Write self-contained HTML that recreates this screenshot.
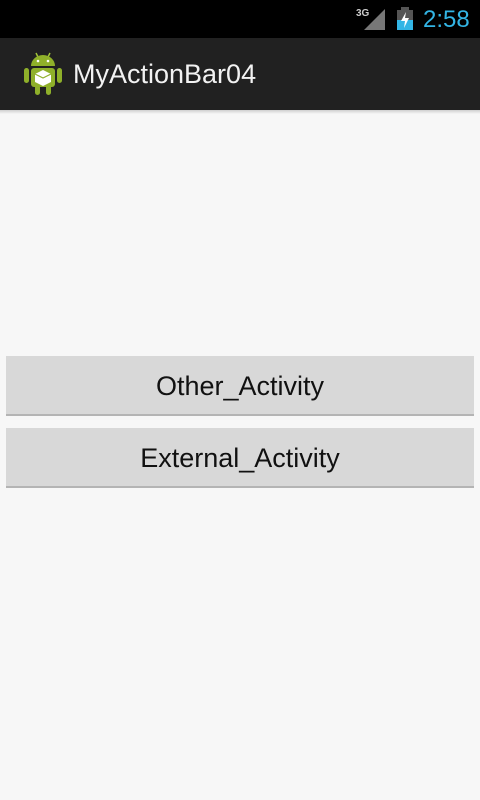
<!DOCTYPE html>
<html><head><style>
body{margin:0;width:480px;height:800px;background:#f7f7f7;font-family:"Liberation Sans",sans-serif;position:relative;overflow:hidden}
.sb{position:absolute;top:0;left:0;width:480px;height:38px;background:#000}
.ab{position:absolute;top:38px;left:0;width:480px;height:72px;background:#212121}
.sh{position:absolute;top:110px;left:0;width:480px;height:4px;background:linear-gradient(#cfcfcf,#f7f7f7)}
.title{position:absolute;left:73px;color:#f2f2f2;font-size:27px}
.btn{position:absolute;left:6px;width:468px;height:58px;background:#d8d8d8;border-bottom:2px solid #b4b4b4;box-sizing:content-box;text-align:center;line-height:60px;font-size:27px;color:#111}
.clock{position:absolute;left:423px;top:6px;color:#33b5e5;font-size:24px}
</style></head><body>
<div class="sb">
<svg style="position:absolute;left:356px;top:6px" width="32" height="24"><text x="0" y="10" font-size="10" fill="#ccc" font-family="Liberation Sans" font-weight="bold">3G</text><polygon points="29,3 29,24 8,24" fill="#777"/></svg>
<svg style="position:absolute;left:396px;top:7px" width="20" height="24"><rect x="5" y="0" width="8" height="3" fill="#555"/><rect x="1" y="3" width="16" height="20" fill="#555"/><rect x="1" y="13" width="16" height="10" fill="#33b5e5"/><polygon points="10,5 5,14 9,14 8,21 13,11 9,11" fill="#fff"/></svg>
<div class="clock">2:58</div>
</div>
<div class="ab">
<svg style="position:absolute;left:24px;top:13px" width="38" height="46" viewBox="0 0 38 46">
<line x1="12" y1="2" x2="14" y2="6" stroke="#a4c639" stroke-width="1.5"/><line x1="26" y1="2" x2="24" y2="6" stroke="#a4c639" stroke-width="1.5"/>
<path d="M7 15 A12 11 0 0 1 31 15 Z" fill="#8fb02a"/>
<rect x="7" y="17" width="24" height="19" rx="3" fill="#8fb02a"/>
<rect x="0" y="17" width="5" height="15" rx="2.5" fill="#8fb02a"/><rect x="33" y="17" width="5" height="15" rx="2.5" fill="#8fb02a"/>
<rect x="11" y="34" width="5" height="10" rx="2.5" fill="#8fb02a"/><rect x="22" y="34" width="5" height="10" rx="2.5" fill="#8fb02a"/>
<circle cx="14" cy="10" r="1.3" fill="#fff"/><circle cx="24" cy="10" r="1.3" fill="#fff"/>
<polygon points="19,19 27,23 27,31 19,35 11,31 11,23" fill="#fff"/>
<polyline points="11,23 19,27 27,23 M19,27 19,35" stroke="#8fb02a" fill="none" stroke-width="1.2"/>
</svg>
<div class="title" style="top:21px">MyActionBar04</div>
</div>
<div class="sh"></div>
<div class="btn" style="top:356px">Other_Activity</div>
<div class="btn" style="top:428px">External_Activity</div>
</body></html>
